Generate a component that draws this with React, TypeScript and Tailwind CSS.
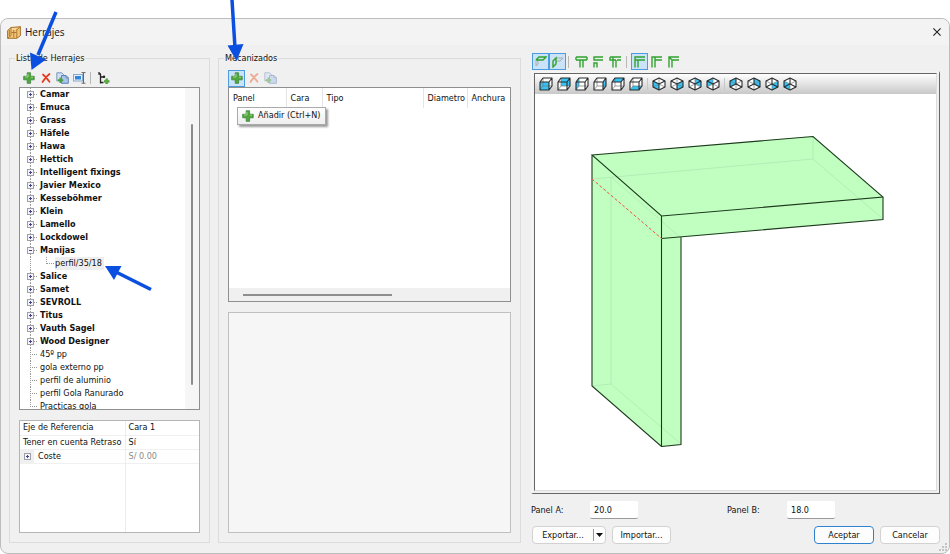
import { type ReactElement, type ReactNode } from "react"

type TreeItem = { name: string, kind: "group" | "open" | "leaf" }

const hardware: TreeItem[] = [
  { name: "Camar", kind: "group" },
  { name: "Emuca", kind: "group" },
  { name: "Grass", kind: "group" },
  { name: "Häfele", kind: "group" },
  { name: "Hawa", kind: "group" },
  { name: "Hettich", kind: "group" },
  { name: "Intelligent fixings", kind: "group" },
  { name: "Javier Mexico", kind: "group" },
  { name: "Kesseböhmer", kind: "group" },
  { name: "Klein", kind: "group" },
  { name: "Lamello", kind: "group" },
  { name: "Lockdowel", kind: "group" },
  { name: "Manijas", kind: "open" },
  { name: "Salice", kind: "group" },
  { name: "Samet", kind: "group" },
  { name: "SEVROLL", kind: "group" },
  { name: "Titus", kind: "group" },
  { name: "Vauth Sagel", kind: "group" },
  { name: "Wood Designer", kind: "group" },
  { name: "45º pp", kind: "leaf" },
  { name: "gola externo pp", kind: "leaf" },
  { name: "perfil de aluminio", kind: "leaf" },
  { name: "perfil Gola Ranurado", kind: "leaf" },
  { name: "Practicas gola", kind: "leaf" },
]

// faces of the cube in cabinet projection: front, back, left, right, top, bottom
const boxFaces: { label: string, points: string }[] = [
  { label: "Frente", points: "1,5 10,5 10,13 1,13" },
  { label: "Detrás", points: "4,1 13,1 13,9 4,9" },
  { label: "Izquierda", points: "1,5 4,1 4,9 1,13" },
  { label: "Derecha", points: "10,5 13,1 13,9 10,13" },
  { label: "Superior", points: "1,5 4,1 13,1 10,5" },
  { label: "Inferior", points: "1,13 4,9 13,9 10,13" },
]

const isoAbove: { label: string, points: string }[] = [
  { label: "Isométrica 1", points: "1,4 7,7 7,13 1,10" },
  { label: "Isométrica 2", points: "13,4 7,7 7,13 13,10" },
  { label: "Isométrica 3", points: "7,1 13,4 13,10 7,7" },
  { label: "Isométrica 4", points: "7,1 1,4 1,10 7,7" },
]

const isoBelow: { label: string, points: string }[] = [
  { label: "Isométrica 5", points: "7,1 1,4 1,10 7,7" },
  { label: "Isométrica 6", points: "7,1 13,4 13,10 7,7" },
  { label: "Isométrica 7", points: "13,4 7,7 7,13 13,10" },
  { label: "Isométrica 8", points: "1,4 7,7 7,13 1,10" },
]

function PlusIcon(): ReactElement {
  return (
    <svg className="size-3" viewBox="0 0 12 12">
      <path d="M4.200 .8h3.400v3.500h3.600v3.500H7.600v3.500H4.200V7.800H.7V4.300H4.200z" fill="#50a838" stroke="#4a8a4c" strokeWidth=".9" />
      <path d="M5 2v3H2M8 5.200h2" fill="none" stroke="#9bd888" strokeWidth="1" />
    </svg>
  )
}

function DeleteIcon({ faded }: { faded?: boolean }): ReactElement {
  return (
    <svg className={faded ? "size-3 opacity-60" : "size-3"} viewBox="0 0 12 12">
      <path d="M3 2.500Q6 5 9.500 9.800M9.500 2Q5.500 5 2.500 10" fill="none" stroke={faded ? "#ee7a52" : "#e5391f"} strokeWidth="1.700" strokeLinecap="round" />
    </svg>
  )
}

function CopyIcon({ faded }: { faded?: boolean }): ReactElement {
  return (
    <svg className={faded ? "h-3 w-[13px] opacity-50" : "h-3 w-[13px]"} viewBox="0 0 13 12">
      <path d="M.8 .8h5l2 2v6H.8z" fill="#cfe0f5" stroke="#7d97bd" />
      <path d="M5.500 3.500h4.500l2.300 2.300v5.500H5.500z" fill="#a9c6ea" stroke="#5f82b5" />
      <path d="M10 3.500v2.300h2.300" fill="none" stroke="#5f82b5" strokeWidth=".8" />
      <path d="M4.500 5.500v5.500M1.700 8.300h5.600" stroke="#4fa044" strokeWidth="2" />
    </svg>
  )
}

function RenameIcon(): ReactElement {
  return (
    <svg className="h-3 w-[13px]" viewBox="0 0 13 12">
      <rect x=".5" y="2.500" width="9" height="6.500" fill="#eaf3fc" stroke="#8aa7c6" />
      <rect x="2" y="4" width="6" height="3.500" fill="#2f86dc" />
      <path d="M8.500 .6h4M10.500 .6v10.500M8.500 11.200h4" stroke="#666" fill="none" />
    </svg>
  )
}

function TreeIcon(): ReactElement {
  return (
    <svg className="h-[13px] w-3" viewBox="0 0 12 13">
      <path d="M1 0v2h2M2.500 2v9.500M2.500 5h4M2.500 10.500h3" fill="none" stroke="#222" strokeWidth="1.300" />
      <circle cx="6" cy="4.800" r="1.200" fill="#222" />
      <path d="M8.700 6.500v5.500M6 9.300h5.500" stroke="#4c9a35" strokeWidth="2.300" />
      <circle cx="8.700" cy="9.300" r="1.800" fill="#5cab42" />
    </svg>
  )
}

function AppIcon(): ReactElement {
  return (
    <svg className="h-[13px] w-[14px]" viewBox="0 0 14 13">
      <path d="M.6 4.500 4 1.500 13.400 .7v9L9.800 12.300H.6z" fill="#f2c678" stroke="#a8712a" />
      <path d="M4 1.500v8l-3.400 2.800M4.500 6.500h5M6.800 3.500v8M9.800 3.500v8.800M9.800 4l3.600-3.300M2.300 4v6" fill="none" stroke="#a8712a" strokeWidth=".9" />
      <path d="M4.800 3h4" stroke="#fff1cf" />
    </svg>
  )
}

function BoxIcon({ points }: { points: string }): ReactElement {
  return (
    <svg className="size-[14px]" viewBox="0 0 14 14">
      <path d="M1 5 4 1H13V9L10 13H1z" fill="#fff" />
      <polygon points={points} fill="#35c4f5" />
      <path d="M4 1v8h9M4 9l-3 4" fill="none" stroke="#777" strokeWidth=".7" />
      <path d="M1 5h9v8H1zM1 5l3-4h9l-3 4M13 1v8l-3 4" fill="none" stroke="#2b2b2b" strokeWidth="1.100" strokeLinejoin="round" />
    </svg>
  )
}

function IsoIcon({ points, below }: { points: string, below?: boolean }): ReactElement {
  const front = below ? "M7 1v6L1 10M7 7l6 3" : "M1 4l6 3 6-3M7 7v6"
  const back = below ? "M1 4l6 3 6-3M7 7v6" : "M7 1v6L1 10M7 7l6 3"
  return (
    <svg className="size-[14px]" viewBox="0 0 14 14">
      <path d="M7 1l6 3v6l-6 3-6-3V4z" fill="#fff" />
      <polygon points={points} fill="#35c4f5" />
      <path d={back} fill="none" stroke="#777" strokeWidth=".7" />
      <path d={front} fill="none" stroke="#2b2b2b" strokeWidth="1.100" />
      <path d="M7 1l6 3v6l-6 3-6-3V4z" fill="none" stroke="#2b2b2b" strokeWidth="1.100" strokeLinejoin="round" />
    </svg>
  )
}

// joint profile drawings of the upper toolbar
function JointIcon({ d, children }: { d: string, children?: ReactNode }): ReactElement {
  return (
    <svg className="size-[13px]" viewBox="0 0 13 13">
      {children}
      <path d={d} fill="none" stroke="#2fa32f" strokeWidth="1.400" />
    </svg>
  )
}

function ToolButton({ label, active, children }: { label: string, active?: boolean, children: ReactNode }): ReactElement {
  return (
    <button
      type="button"
      aria-label={label}
      className={active
        ? "flex size-[17px] items-center justify-center border border-[#4d9ce0] bg-[#cbe3f8]"
        : "flex size-[17px] items-center justify-center border border-transparent"}
    >
      {children}
    </button>
  )
}

function Divider(): ReactElement {
  return <span className="mr-1 ml-0.5 h-3 w-px bg-[#b8b8b8]"></span>
}

function Expander({ name, open }: { name: string, open?: boolean }): ReactElement {
  return (
    <button type="button" aria-label={name} className="relative flex size-[7px] items-center justify-center border border-[#a0a0a8] bg-[#f4f4fa]">
      <span className="absolute h-px w-[3px] bg-[#44448a]"></span>
      {!open && <span className="absolute h-[3px] w-px bg-[#44448a]"></span>}
    </button>
  )
}

function HardwareTree(): ReactElement {
  return (
    <div className="flex h-[323px] overflow-hidden border border-[#8f8f8f] bg-white">
      <ul className="flex-1 pl-[7px]">
        {hardware.map((item, i) => (
          <li key={item.name}>
            <div className="flex h-[13px] items-center">
              <span className="relative flex h-full w-[13px] shrink-0 items-center">
                <span className={i == hardware.length - 1
                  ? "absolute top-0 left-[3px] h-[7px] border-l border-dotted border-[#999]"
                  : "absolute top-0 left-[3px] h-full border-l border-dotted border-[#999]"}></span>
                <span className="absolute right-[3px] left-[3px] border-t border-dotted border-[#999]"></span>
                {item.kind != "leaf" && <Expander name={item.name} open={item.kind == "open"} />}
              </span>
              <span className={item.kind == "leaf" ? "whitespace-nowrap" : "font-bold whitespace-nowrap"}>{item.name}</span>
            </div>
            {item.kind == "open" && (
              <ul>
                <li className="flex h-[13px]">
                  <span className="ml-[3px] w-4 border-l border-dotted border-[#999]"></span>
                  <span className="mr-px h-[7px] w-2 border-b border-l border-dotted border-[#999]"></span>
                  <span className="flex items-center bg-[#eeeeee] pr-0.5">perfil/35/18</span>
                </li>
              </ul>
            )}
          </li>
        ))}
      </ul>
      <div className="flex w-[14px] justify-center bg-[#f6f6f6] pt-9 pb-6">
        <span className="w-0.5 rounded bg-[#8c8c8c]"></span>
      </div>
    </div>
  )
}

function Properties(): ReactElement {
  return (
    <div className="flex-1 border border-[#b5b5b5] bg-white">
      <table className="h-full w-full table-fixed border-collapse">
        <tbody>
          <tr className="h-[14px] border-b border-[#f0f0f0]">
            <th className="w-[105px] border-r border-[#ececec] pl-[3px] text-left font-normal whitespace-nowrap">Eje de Referencia</th>
            <td className="pl-[3px]">Cara 1</td>
          </tr>
          <tr className="h-[14px] border-b border-[#f0f0f0]">
            <th className="border-r border-[#ececec] pl-[3px] text-left font-normal whitespace-nowrap">Tener en cuenta Retraso</th>
            <td className="pl-[3px]">Sí</td>
          </tr>
          <tr className="h-[14px] border-b border-[#f0f0f0]">
            <th className="border-r border-[#ececec] text-left font-normal">
              <span className="flex items-center">
                <span className="mr-1 flex h-[13px] w-[14px] items-center justify-center bg-[#f0f0f0]"><Expander name="Coste" /></span>
                Coste
              </span>
            </th>
            <td className="pl-[3px] text-[#8a8a8a]">S/ 0.00</td>
          </tr>
          <tr>
            <td className="border-r border-[#ececec]"></td>
            <td></td>
          </tr>
        </tbody>
      </table>
    </div>
  )
}

function Machining(): ReactElement {
  return (
    <div className="flex h-[215px] flex-col border border-[#8f8f8f] bg-white">
      <table className="w-full table-fixed border-collapse">
        <thead>
          <tr className="h-5 text-left">
            <th className="w-[57px] border-r border-[#e4e4e4] pl-1 font-normal">Panel</th>
            <th className="w-9 border-r border-[#e4e4e4] pl-1 font-normal">Cara</th>
            <th className="border-r border-[#e4e4e4] pl-1 font-normal">Tipo</th>
            <th className="w-11 border-r border-[#e4e4e4] pl-1 font-normal">Diametro</th>
            <th className="w-[43px] pl-1 font-normal">Anchura</th>
          </tr>
        </thead>
      </table>
      <div className="mt-auto flex h-[13px] items-center bg-[#f0f0f0] pl-[14px]">
        <span className="h-0.5 w-[149px] bg-[#8f8f8f]"></span>
      </div>
    </div>
  )
}

function PanelDrawing(): ReactElement {
  return (
    <svg className="mt-[41px] ml-[55px] h-[312px] w-[294px]" viewBox="590 135 294 312">
      <path d="M592 155 813 136 883 197 883 219 681 237.500 681 444 662 446.500 592 386z" fill="#c1ffc1" />
      <path d="M592 179 813 159 883 219M813 137V159M611 177V384L592 386M611 384 681 444M611 177 681 238" fill="none" stroke="#aee8b2" strokeWidth=".8" />
      <path d="M592 155 813 136.500 883 197 661.500 216zM592 155V386L661.500 446.500V216M883 197V219.500L661.500 238.500M681 237V444.500L661.500 446.500" fill="none" stroke="#1d3a1d" strokeWidth="1.100" />
      <path d="M592 179 661.500 238.500" stroke="#c1ffc1" />
      <path d="M592 179 661.500 238.500" stroke="#f0503c" strokeDasharray="3 2" />
    </svg>
  )
}

function Viewer(): ReactElement {
  return (
    <section className="flex min-w-0 flex-1 flex-col pt-px pb-px">
      <div className="flex items-center pl-px">
        <ToolButton label="Panel A" active>
          <JointIcon d="M2 5 5 2h7L9 5H2">
            <path d="M2 5v6l2-2V5" fill="none" stroke="#aaa" />
          </JointIcon>
        </ToolButton>
        <ToolButton label="Panel B" active>
          <JointIcon d="M2 6l3-3v6l-3 3z">
            <path d="M5 3h7L9 6H5" fill="none" stroke="#aaa" />
          </JointIcon>
        </ToolButton>
        <Divider />
        <ToolButton label="Unión en T"><JointIcon d="M1 2h11M1 5h11M1 2v3M12 2v3M5 5v7.500M8 5v7.500" /></ToolButton>
        <ToolButton label="Unión separada"><JointIcon d="M11 2H2v3h9M2 12.500V8h3v4.500" /></ToolButton>
        <ToolButton label="Unión embutida"><JointIcon d="M1 2h11M1 2v3h3M8 5h4M4 2v10.500M7 5v7.500M7 5H4" /></ToolButton>
        <Divider />
        <ToolButton label="Esquina superior" active><JointIcon d="M12 2H2v10.500M12 5H2M5 5v7.500" /></ToolButton>
        <ToolButton label="Esquina lateral"><JointIcon d="M12 2H2v10.500M12 5H5M5 2v10.500" /></ToolButton>
        <ToolButton label="Inglete"><JointIcon d="M12 2H2v10.500M12 5H5v7.500M2 2l3 3" /></ToolButton>
      </div>
      <div className="mt-px flex flex-1 border-t-2 border-r border-b border-l-2 border-t-[#f4f4f4] border-r-[#666] border-b-[#666] border-l-[#f4f4f4]">
        <div className="mr-0.5 mb-0.5 ml-px flex-1 border border-t-[#666] border-r-[#ddd] border-b-[#ddd] border-l-[#666] bg-white">
          <div className="flex h-5 items-center gap-1 bg-linear-to-b from-white to-[#c8c8c8] pl-1">
            {boxFaces.map((face) => (
              <button type="button" key={face.label} aria-label={face.label}><BoxIcon points={face.points} /></button>
            ))}
            <span className="h-3 w-px bg-[#c8c8c8]"></span>
            {isoAbove.map((face) => (
              <button type="button" key={face.label} aria-label={face.label}><IsoIcon points={face.points} /></button>
            ))}
            <span className="h-3 w-px bg-[#c8c8c8]"></span>
            {isoBelow.map((face) => (
              <button type="button" key={face.label} aria-label={face.label}><IsoIcon points={face.points} below /></button>
            ))}
          </div>
          <PanelDrawing />
        </div>
      </div>
      <div className="mt-[7px] flex items-center">
        <label htmlFor="panel-a" className="w-[59px]">Panel A:</label>
        <input id="panel-a" defaultValue="20.0" className="h-[18px] w-12 rounded-xs border-b border-[#999] bg-white px-1" />
        <label htmlFor="panel-b" className="ml-[89px] w-[60px]">Panel B:</label>
        <input id="panel-b" defaultValue="18.0" className="h-[18px] w-12 rounded-xs border-b border-[#999] bg-white px-1" />
      </div>
      <div className="mt-[7px] flex gap-1.5 pl-px">
        <div className="flex h-[18px] w-[74px] items-center rounded-sm border border-[#d2d2d2] bg-[#fdfdfd]">
          <button type="button" className="flex-1 text-center">Exportar...</button>
          <button type="button" aria-label="Más opciones de exportación" className="flex h-3 w-3 items-center justify-center border-l border-[#999]">
            <svg className="h-1 w-[7px]" viewBox="0 0 7 4"><path d="M0 0h7L3.500 4z" fill="#111" /></svg>
          </button>
        </div>
        <button type="button" className="h-[18px] w-[59px] rounded-sm border border-[#d2d2d2] bg-[#fdfdfd]">Importar...</button>
        <button type="button" className="ml-auto h-[18px] w-[60px] rounded-sm border border-[#2f82d0] bg-[#fdfdfd]">Aceptar</button>
        <button type="button" className="h-[18px] w-[60px] rounded-sm border border-[#d2d2d2] bg-[#fdfdfd]">Cancelar</button>
      </div>
    </section>
  )
}

// blue pointer arrows drawn over the dialog
function Arrows(): ReactElement {
  return (
    <svg className="pointer-events-none absolute top-0 left-0 h-[300px] w-[260px]" viewBox="0 0 260 300">
      <g stroke="#0b4fe0" strokeWidth="3.500">
        <path d="M56 12 38 55" />
        <path d="M232 0 235 48" />
        <path d="M151 289.500 116 272" />
      </g>
      <g fill="#0b4fe0">
        <path d="M31.500 70 30 52.500 46 59.500z" />
        <path d="M236.500 61 227.500 45.500 243.500 44z" />
        <path d="M105 266 121.500 266 114 280z" />
      </g>
    </svg>
  )
}

export default function App(): ReactElement {
  return (
    <div className="relative flex h-screen min-h-[554px] flex-col overflow-hidden bg-white pt-[18px] font-['DejaVu_Sans_Condensed','DejaVu_Sans','Noto_Sans',sans-serif] text-[9px] leading-[13px] text-[#111]">
      <main className="relative flex flex-1 flex-col rounded-lg border border-[#bdbdbd] bg-[#f0f0f0]">
        <header className="flex h-[26px] shrink-0 items-center rounded-t-lg bg-[#f3f3f3] pr-2 pl-1.5">
          <AppIcon />
          <h1 className="ml-1 font-['Open_Sans','Noto_Sans',sans-serif] text-[10px]">Herrajes</h1>
          <button type="button" aria-label="Cerrar" className="ml-auto">
            <svg className="size-2" viewBox="0 0 8 8"><path d="M.4 .4l7.200 7.200M7.600 .4L.4 7.600" stroke="#222" strokeWidth="1.100" /></svg>
          </button>
        </header>
        <div className="flex flex-1 pt-[7px] pr-[9px] pb-2 pl-2">
          <fieldset className="mr-2 mb-0.5 flex w-[201px] shrink-0 flex-col border border-[#dcdcdc] px-[9px] pb-[9px]">
            <legend className="-ml-1 px-px">Lista de Herrajes</legend>
            <div className="flex h-[22px] items-center pt-1 pl-px">
              <ToolButton label="Añadir herraje"><PlusIcon /></ToolButton>
              <ToolButton label="Eliminar herraje"><DeleteIcon /></ToolButton>
              <ToolButton label="Duplicar herraje"><CopyIcon /></ToolButton>
              <ToolButton label="Renombrar"><RenameIcon /></ToolButton>
              <Divider />
              <ToolButton label="Añadir subgrupo"><TreeIcon /></ToolButton>
            </div>
            <div className="flex flex-1 flex-col gap-2.5">
              <HardwareTree />
              <Properties />
            </div>
          </fieldset>
          <fieldset className="mr-2.5 mb-0.5 flex w-[303px] shrink-0 flex-col border border-[#dcdcdc] px-[9px] pb-[9px]">
            <legend className="-ml-1 px-px">Mecanizados</legend>
            <div className="flex h-[22px] items-center pt-1">
              <div className="relative">
                <ToolButton label="Añadir" active><PlusIcon /></ToolButton>
                <div role="tooltip" className="absolute top-[37px] left-[9px] flex h-[18px] items-center gap-1 border border-[#aaa] bg-linear-to-b from-white to-[#eeeeee] px-1 whitespace-nowrap shadow-[2px_2px_2px_#00000066]">
                  <PlusIcon />
                  Añadir (Ctrl+N)
                </div>
              </div>
              <ToolButton label="Eliminar mecanizado"><DeleteIcon faded /></ToolButton>
              <ToolButton label="Duplicar mecanizado"><CopyIcon faded /></ToolButton>
            </div>
            <div className="flex flex-1 flex-col gap-2.5">
              <Machining />
              <div className="flex-1 border border-[#c0c0c0] bg-[#f6f6f6]"></div>
            </div>
          </fieldset>
          <Viewer />
        </div>
        <svg className="absolute right-0.5 bottom-0.5 size-2" viewBox="0 0 8 8">
          <path d="M6 0h2v2H6zM6 3h2v2H6zM6 6h2v2H6zM3 3h2v2H3zM3 6h2v2H3zM0 6h2v2H0z" fill="#c4c4c4" />
        </svg>
      </main>
      <Arrows />
    </div>
  )
}
